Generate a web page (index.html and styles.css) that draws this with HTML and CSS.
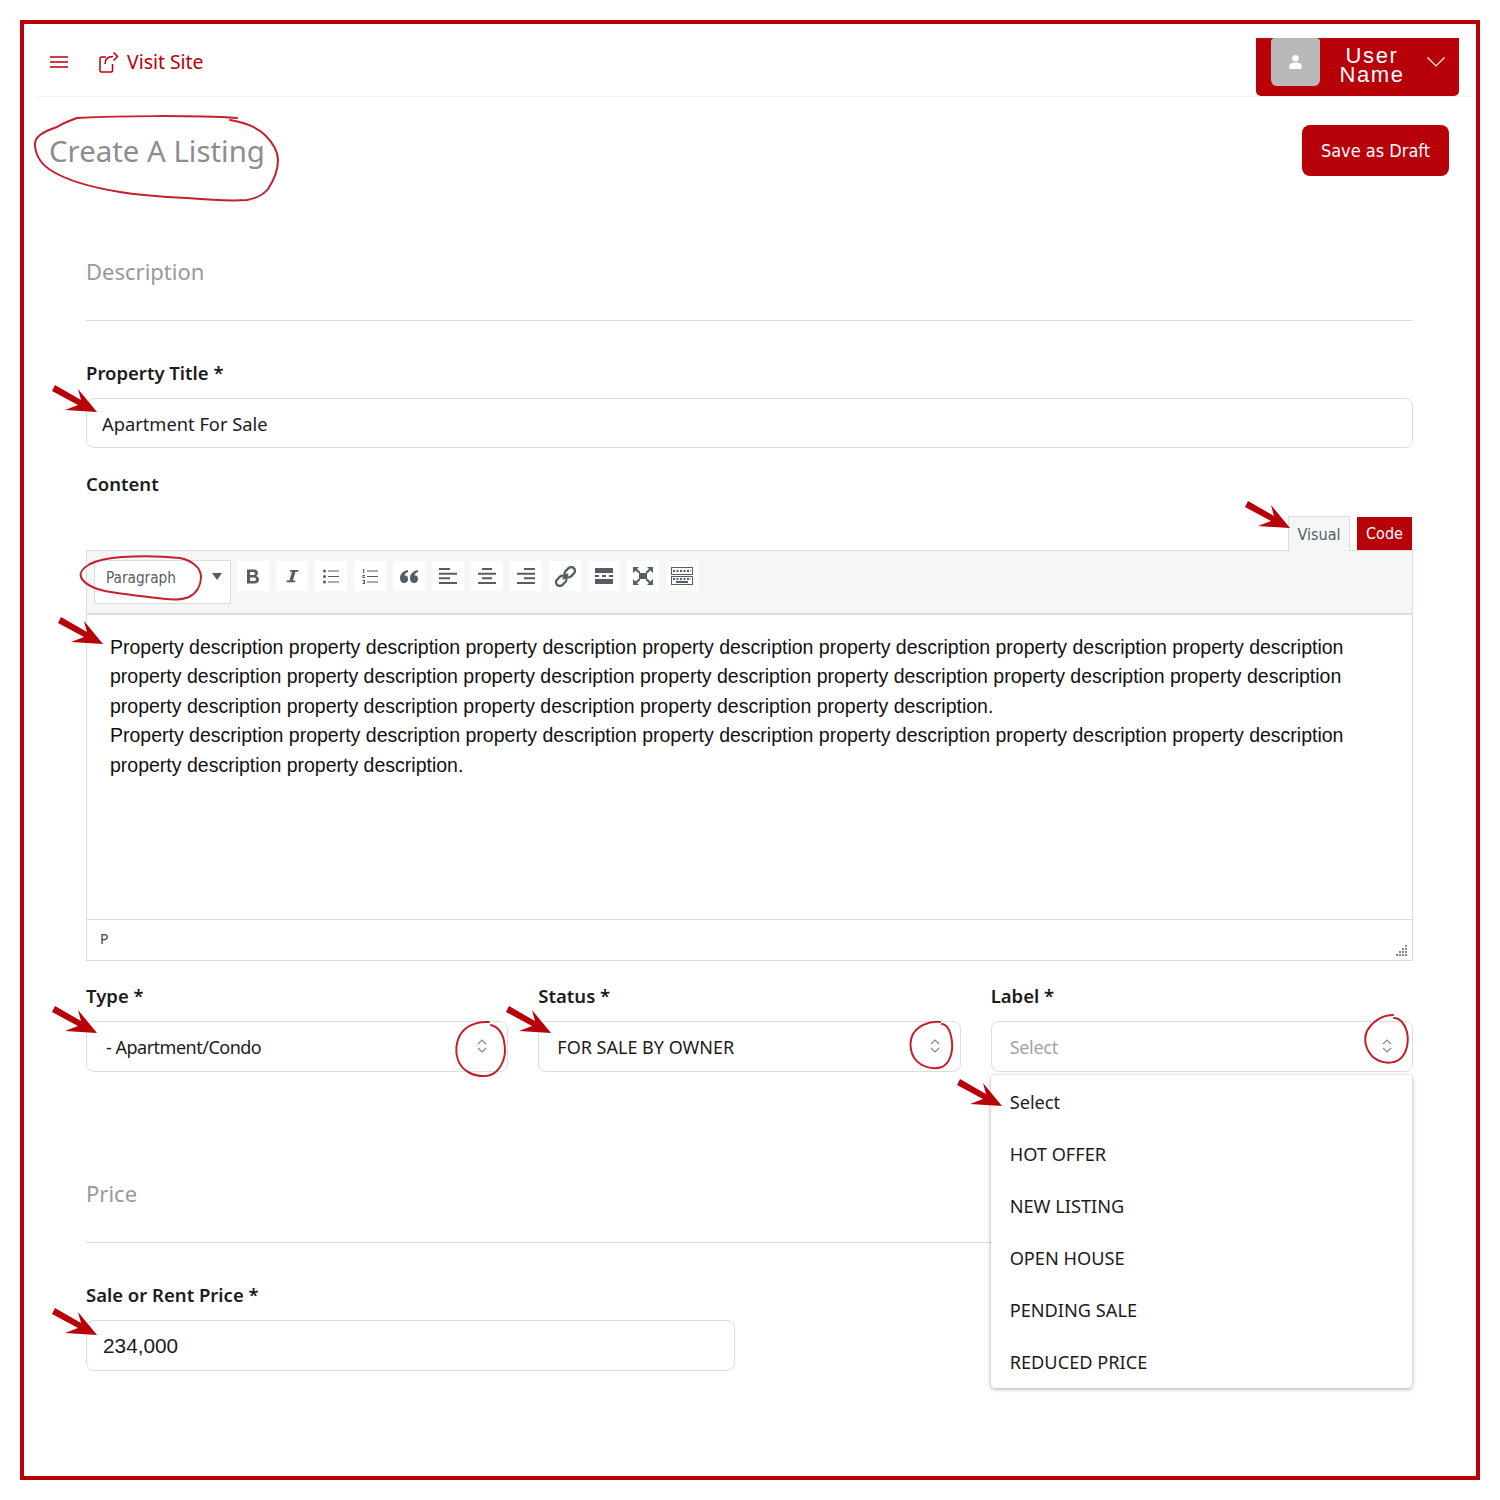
FILE: index.html
```html
<!DOCTYPE html>
<html lang="en">
<head>
  <meta charset="UTF-8">
  <meta name="viewport" content="width=device-width, initial-scale=1.0">
  <title>Create A Listing</title>
  <link rel="stylesheet" href="styles.css">
</head>
<body>
  <div class="frame">
    <header class="topbar">
      <div class="topbar-left">
        <svg class="menu-icon" width="18" height="12" viewBox="0 0 18 12"><path d="M0 1h18M0 6h18M0 11h18" stroke="#b80008" stroke-width="1.3" fill="none"/></svg>
        <a class="visit-link" href="#">
          <svg width="20" height="22" viewBox="0 0 20 22"><path d="M7 6H2.500A1.500 1.500 0 0 0 1 7.500V19.500A1.500 1.500 0 0 0 2.500 21H12A1.500 1.500 0 0 0 13.500 19.500V13M6 13C6 8 9 5.500 14 5.500M14.500 1.500L18.500 5.500L14.500 9.500" fill="none" stroke="#b80008" stroke-width="1.500"/></svg>
          Visit Site
        </a>
      </div>
      <div class="user-menu">
        <div class="avatar">
          <svg width="15" height="16" viewBox="0 0 16 17"><circle cx="8" cy="4.500" r="3.500" fill="#fff"/><path d="M1.500 16V12.500C1.500 10 4 9 8 9S14.500 10 14.500 12.500V16Z" fill="#fff"/></svg>
        </div>
        <div class="user-name">User<br>Name</div>
        <svg class="user-caret" width="18" height="10" viewBox="0 0 18 10"><path d="M.5.500L9 9L17.500.500" fill="none" stroke="#fff" stroke-width="1.200"/></svg>
      </div>
    </header>

    <div class="title-row">
      <h1>Create A Listing</h1>
      <button type="button" class="draft-btn">Save as Draft</button>
    </div>

    <main class="listing-form">
      <h2 class="section-title">Description</h2>

      <label class="field-label">Property Title *</label>
      <div class="text-field">Apartment For Sale</div>

      <label class="field-label content-label">Content</label>
      <div class="editor-tabs">
        <span class="tab tab-visual">Visual</span>
        <span class="tab tab-code">Code</span>
      </div>
      <div class="editor">
        <div class="toolbar">
          <div class="format-select">
            <span>Paragraph</span>
            <svg width="10" height="7" viewBox="0 0 10 7"><path d="M0 0h10L5 7z" fill="#555d66"/></svg>
          </div>
          <span class="tool"><svg width="14" height="17" viewBox="0 0 14 16"><path d="M1 1h6.500C10.500 1 12 2.500 12 4.500C12 6 11.200 7 10 7.400C12 7.800 13 9.200 13 11C13 13.500 11.200 15 8 15H1ZM4 3.500V6.500H7C8.300 6.500 9 5.900 9 5S8.300 3.500 7 3.500ZM4 9V12.500H7.500C9 12.500 10 11.900 10 10.700S9 9 7.500 9Z" fill="#555d66" fill-rule="evenodd"/></svg></span>
          <span class="tool"><svg width="14" height="16" viewBox="0 0 16 16"><path d="M6 1h9.500l-.5 2h-3L9 13h3l-.5 2H1.500l.5-2h3L8 3H5.500Z" fill="#555d66"/></svg></span>
          <span class="tool"><svg width="16" height="15" viewBox="0 0 16 15"><g fill="#555d66"><circle cx="1.500" cy="2" r="1.500"/><circle cx="1.500" cy="7.500" r="1.500"/><circle cx="1.500" cy="13" r="1.500"/><path d="M5 1.500h11v1H5zM5 7h11v1H5zM5 12.500h11v1H5z"/></g></svg></span>
          <span class="tool"><svg width="16" height="15" viewBox="0 0 16 15"><g fill="#555d66"><path d="M1 0h1.200v4H1zM.5 6h2.500v1H1.500v1H3v1H.5zM.5 11H3v4H.500v-1H2v-.5H1v-.8h1V12H.5z"/><path d="M5 1.500h11v1H5zM5 7h11v1H5zM5 12.500h11v1H5z"/></g></svg></span>
          <span class="tool"><svg width="18" height="13" viewBox="0 0 18 13"><path d="M8 0v2C5.500 3 4.500 4 4.500 5.500C7 5 8 6.500 8 9S6.500 13 4 13S0 11 0 8C0 4 3 1 8 0ZM18 0v2C15.500 3 14.500 4 14.500 5.500C17 5 18 6.500 18 9S16.500 13 14 13S10 11 10 8C10 4 13 1 18 0Z" fill="#555d66"/></svg></span>
          <span class="tool"><svg width="18" height="16" viewBox="0 0 18 16"><path d="M0 0h11v2H0zM0 4.700h18v2H0zM0 9.300h11v2H0zM0 14h18v2H0z" fill="#555d66"/></svg></span>
          <span class="tool"><svg width="18" height="16" viewBox="0 0 18 16"><path d="M4 0h10v2H4zM0 4.700h18v2H0zM4 9.300h10v2H4zM0 14h18v2H0z" fill="#555d66"/></svg></span>
          <span class="tool"><svg width="18" height="16" viewBox="0 0 18 16"><path d="M7 0h11v2H7zM0 4.700h18v2H0zM7 9.300h11v2H7zM0 14h18v2H0z" fill="#555d66"/></svg></span>
          <span class="tool"><svg width="21" height="21" viewBox="0 0 21 21"><g fill="none" stroke="#555d66" stroke-width="2.400"><rect x="9" y="2.500" width="11.500" height="7.500" rx="3.750" transform="rotate(-45 14.750 6.250)"/><rect x=".5" y="11" width="11.500" height="7.500" rx="3.750" transform="rotate(-45 6.250 14.750)"/><path d="M8 13L13 8"/></g></svg></span>
          <span class="tool"><svg width="18" height="16" viewBox="0 0 18 16"><path d="M0 0h18v5H0zM0 7h4v2H0zM7 7h4v2H7zM14 7h4v2h-4zM0 11h18v5H0z" fill="#555d66"/></svg></span>
          <span class="tool"><svg width="20" height="18" viewBox="0 0 20 18"><g fill="#555d66"><rect x="6" y="6" width="8" height="6"/><path d="M0 0h6L4 2l3.500 3L6 6.500L2.500 3.500L0 6zM20 0v6l-2.500-2.500L14 6.500L12.500 5L16 2L14 0zM0 18v-6l2.500 2.500L6 11.500L7.500 13L4 16l2 2zM20 18h-6l2-2l-3.500-3l1.500-1.500l3.500 3L20 12z"/></g></svg></span>
          <span class="tool"><svg width="22" height="18" viewBox="0 0 22 18"><g fill="none" stroke="#555d66"><rect x=".5" y=".5" width="21" height="7"/><rect x=".5" y="9.500" width="21" height="8"/><path d="M2 4h18M2 12h18" stroke-width="2" stroke-dasharray="2 1.500"/><path d="M5 15h12" stroke-width="2"/></g></svg></span>
        </div>
        <div class="editor-body">
          Property description property description property description property description property description property description property description property description property description property description property description property description property description property description property description property description property description property description property description.<br>
          Property description property description property description property description property description property description property description property description property description.
        </div>
        <div class="editor-status">
          <span>P</span>
          <svg width="12" height="12" viewBox="0 0 12 12"><g fill="#888"><path d="M9 0h2v2H9zM9 3h2v2H9zM6 3h2v2H6zM9 6h2v2H9zM6 6h2v2H6zM3 6h2v2H3zM9 9h2v2H9zM6 9h2v2H6zM3 9h2v2H3zM0 9h2v2H0z"/></g></svg>
        </div>
      </div>

      <div class="select-row">
        <div class="select-col">
          <label class="field-label">Type *</label>
          <div class="select-box tight">- Apartment/Condo
            <svg class="updown" width="10" height="14" viewBox="0 0 10 14"><path d="M1 5L5 1L9 5M1 9L5 13L9 9" fill="none" stroke="#888" stroke-width="1.200"/></svg>
          </div>
        </div>
        <div class="select-col">
          <label class="field-label">Status *</label>
          <div class="select-box">FOR SALE BY OWNER
            <svg class="updown" width="10" height="14" viewBox="0 0 10 14"><path d="M1 5L5 1L9 5M1 9L5 13L9 9" fill="none" stroke="#888" stroke-width="1.200"/></svg>
          </div>
        </div>
        <div class="select-col">
          <label class="field-label">Label *</label>
          <div class="select-box placeholder">Select
            <svg class="updown" width="10" height="14" viewBox="0 0 10 14"><path d="M1 5L5 1L9 5M1 9L5 13L9 9" fill="none" stroke="#888" stroke-width="1.200"/></svg>
            <ul class="select-menu">
              <li>Select</li>
              <li>HOT OFFER</li>
              <li>NEW LISTING</li>
              <li>OPEN HOUSE</li>
              <li>PENDING SALE</li>
              <li>REDUCED PRICE</li>
            </ul>
          </div>
        </div>
      </div>

      <h2 class="section-title price-title">Price</h2>

      <label class="field-label">Sale or Rent Price *</label>
      <div class="text-field price-field">234,000</div>
    </main>

    <!-- hand drawn notes on top of the form -->
    <svg class="notes" width="1500" height="1500" viewBox="0 0 1500 1500">
      <defs>
        <polygon id="arrow" points="-45,-21 -42,-27 -16,-12 -19,-23 0,0 -32,-2 -19,-7" fill="#b80008"/>
      </defs>
      <use href="#arrow" x="97" y="412"/>
      <use href="#arrow" x="1290" y="528"/>
      <use href="#arrow" x="103" y="644"/>
      <use href="#arrow" x="97" y="1033"/>
      <use href="#arrow" x="551" y="1033"/>
      <use href="#arrow" x="1002" y="1106"/>
      <use href="#arrow" x="97" y="1335"/>
      <g fill="none" stroke="#c4202c" stroke-width="2" stroke-linecap="round">
        <path d="M237 118C190 115 120 116 77 118C66 122 60 125 57 127C42 132 34 137 35 146C36 156 42 165 52 171C70 182 95 188 120 192C145 196 165 197 187 198C210 200 235 201 247 200C258 198 264 194 268 189C274 180 278 170 278 160C278 150 272 142 265 135C258 128 248 123 230 120"/>
        <path d="M180 558C160 556 140 556 122 557C108 558 98 560 90 564C83 568 79 572 81 577C84 584 92 588 105 591C122 594 140 596 157 598C170 600 182 600 189 597C197 593 201 585 201 577C201 569 194 561 180 558"/>
        <path d="M489 1022C475 1021 465 1027 460 1035C456 1042 455 1052 458 1060C462 1071 474 1077 486 1076C497 1075 504 1064 505 1052C505 1040 502 1028 491 1025"/>
        <path d="M940 1022C928 1021 918 1026 913 1034C909 1042 910 1052 915 1059C921 1067 933 1070 942 1067C950 1063 953 1052 952 1042C951 1033 948 1025 942 1024"/>
        <path d="M1393 1015C1382 1015 1372 1022 1367 1031C1363 1040 1366 1050 1373 1057C1380 1063 1392 1065 1400 1059C1407 1053 1409 1042 1407 1032C1405 1024 1400 1018 1394 1018"/>
      </g>
    </svg>
  </div>
</body>
</html>
```

FILE: styles.css
```css
/* General Styles */
* {
  box-sizing: border-box;
}

body {
  font-family: "Noto Sans", Arial, sans-serif;
  margin: 0;
  padding: 20px;
  background-color: #fff;
  color: #1c1c1c;
}

.frame {
  width: 1460px;
  height: 1460px;
  border: 4px solid #b80008;
  background: #fff;
}

/* Top Bar */
.topbar {
  display: flex;
  justify-content: space-between;
  align-items: flex-start;
  height: 73px;
  margin-left: 12px;
  padding: 14px 17px 0 14px;
  border-bottom: 1px solid #f2f2f2;
}

.topbar-left {
  display: flex;
  align-items: center;
  height: 48px;
}

.menu-icon {
  margin-right: 31px;
}

.visit-link {
  display: flex;
  align-items: center;
  gap: 8px;
  margin-top: -1px;
  color: #b80008;
  font-size: 19.400px;
  text-decoration: none;
}

.user-menu {
  display: flex;
  align-items: flex-start;
  width: 203px;
  height: 58px;
  padding: 0 14px 0 15px;
  background: #b80008;
  border-radius: 0 0 5px 5px;
  color: #fff;
}

.user-caret {
  margin-top: 19px;
}

.avatar {
  display: flex;
  align-items: center;
  justify-content: center;
  width: 49px;
  height: 48px;
  background: #b9b9b9;
  border-radius: 4px 4px 6px 6px;
}

.user-name {
  flex: 1;
  margin: 8px 3px 0 0;
  font-family: "Liberation Sans", Arial, sans-serif;
  font-size: 22px;
  line-height: 19px;
  letter-spacing: 1.600px;
  text-align: center;
}

/* Page Title */
.title-row {
  display: flex;
  justify-content: space-between;
  align-items: flex-start;
  padding: 28px 27px 0 25px;
}

h1 {
  margin: 1px 0 0;
  font-size: 29.400px;
  font-weight: 400;
  line-height: 50px;
  color: #8d8d8d;
}

.draft-btn {
  width: 147px;
  height: 51px;
  padding: 0;
  border: none;
  border-radius: 8px;
  background: #b80008;
  color: #fff;
  font-family: "DejaVu Sans", sans-serif;
  font-stretch: condensed;
  font-size: 18px;
}

/* Form */
.listing-form {
  padding: 0 63px 0 62px;
}

.section-title {
  margin: 80px 0 39px;
  padding-bottom: 34px;
  border-bottom: 1px solid #ddd;
  font-size: 22px;
  font-weight: 400;
  line-height: 30px;
  color: #999;
}

.price-title {
  margin-top: 106px;
}

.field-label {
  display: block;
  margin-bottom: 12px;
  font-size: 18.500px;
  font-weight: 600;
  line-height: 26px;
}

.content-label {
  margin: 23px 0 19px;
}

.text-field {
  display: flex;
  align-items: center;
  height: 50px;
  padding-left: 15px;
  border: 1px solid #ddd;
  border-radius: 8px;
  font-size: 18.300px;
}

.price-field {
  width: 649px;
  height: 51px;
  padding-left: 16px;
  font-family: "Liberation Sans", Arial, sans-serif;
  font-size: 20.800px;
}

/* Editor */
.editor-tabs {
  display: flex;
  justify-content: flex-end;
  align-items: flex-end;
  gap: 7px;
  height: 35px;
  margin-bottom: -1px;
  padding-right: 1px;
  position: relative;
}

.tab {
  display: flex;
  align-items: center;
  justify-content: center;
  font-family: "DejaVu Sans", sans-serif;
  font-stretch: condensed;
  font-size: 16px;
}

.tab-visual {
  width: 62px;
  height: 35px;
  background: #f5f6f6;
  border: 1px solid #ddd;
  border-bottom: none;
  color: #555d66;
}

.tab-code {
  width: 55px;
  height: 33px;
  margin-bottom: 1px;
  background: #b80008;
  color: #fff;
}

.editor {
  border: 1px solid #ddd;
}

.toolbar {
  display: flex;
  align-items: flex-start;
  gap: 7px;
  height: 64px;
  padding: 10px 0 0 7px;
  background: #f5f6f6;
  border-bottom: 2px solid #ddd;
}

.format-select {
  display: flex;
  justify-content: space-between;
  align-items: center;
  width: 137px;
  height: 44px;
  margin: -1px -1px 0 0;
  padding: 0 8px 0 11px;
  background: #fff;
  border: 1px solid #ddd;
  color: #555d66;
  font-family: "DejaVu Sans", sans-serif;
  font-stretch: condensed;
  font-size: 15.200px;
}

.format-select span {
  margin-bottom: 9px;
}

.format-select svg {
  margin-bottom: 12px;
}

.tool {
  display: flex;
  align-items: center;
  justify-content: center;
  width: 32px;
  height: 30px;
  background: #fff;
}

.editor-body {
  height: 304px;
  padding: 18px 23px 0;
  font-family: "Liberation Sans", Arial, sans-serif;
  font-size: 19.500px;
  line-height: 29.400px;
  color: #111;
}

.editor-status {
  display: flex;
  justify-content: space-between;
  align-items: flex-end;
  height: 41px;
  padding: 0 4px 3px 13px;
  border-top: 1px solid #ddd;
  font-size: 14px;
  color: #444;
}

.editor-status span {
  margin-bottom: 9px;
}

/* Select Row */
.select-row {
  display: grid;
  grid-template-columns: repeat(3, 1fr);
  gap: 30px;
  margin-top: 22px;
}

.select-box {
  position: relative;
  display: flex;
  align-items: center;
  height: 51px;
  padding-left: 18px;
  border: 1px solid #ddd;
  border-radius: 8px;
  font-size: 18px;
}

.select-box.tight {
  padding-left: 19px;
  letter-spacing: -0.500px;
}

.select-box.placeholder {
  letter-spacing: -0.300px;
  color: #a3a3a3;
}

.updown {
  position: absolute;
  right: 20px;
  top: 17px;
}

.select-menu {
  position: absolute;
  top: 53px;
  left: -1px;
  right: 0;
  z-index: 2;
  margin: 0;
  padding: 1px 0 0;
  list-style: none;
  background: #fff;
  border-radius: 4px;
  box-shadow: 0 1px 4px rgba(0, 0, 0, 0.35);
  color: #1c1c1c;
  font-size: 18.200px;
  letter-spacing: 0;
}

.select-menu li {
  height: 52px;
  padding-left: 19px;
  line-height: 52px;
}

/* Notes */
.notes {
  position: absolute;
  top: 0;
  left: 0;
  z-index: 3;
  pointer-events: none;
}
```
